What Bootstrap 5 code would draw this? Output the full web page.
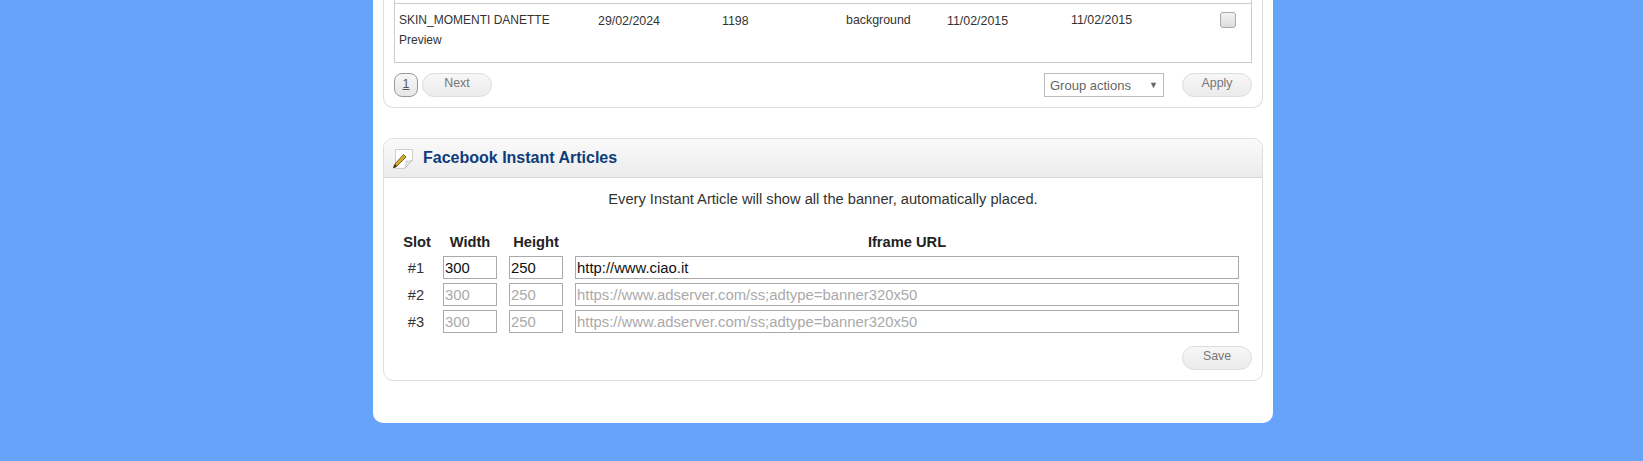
<!DOCTYPE html>
<html lang="en">
<head>
    <meta charset="UTF-8">
    <title>Facebook Instant Articles</title>
    <link href="https://cdn.jsdelivr.net/npm/bootstrap@5.3.0/dist/css/bootstrap.min.css" rel="stylesheet">
    <style>
        body {
            padding-left: 3px;
            background-color: #66a3f9;
            font-family: "Liberation Sans", Arial, sans-serif;
            color: #333;
        }
        .page-panel {
            width: 900px;
            margin: 0 auto;
            padding: 0 10px 42px;
            background: #fff;
            border-radius: 0 0 10px 10px;
        }
        .box-top {
            border: 1px solid #ddd;
            border-top: 0;
            border-radius: 0 0 10px 10px;
            padding: 0 10px 10px;
            height: 108px;
            margin-bottom: 30px;
        }
        .banner-list {
            border: 1px solid #ccc;
            border-top: 0;
            height: 63px;
            font-size: 12px;
            margin-bottom: 10px;
        }
        .banner-list .top-rule {
            height: 4px;
            border-bottom: 1px solid #ccc;
        }
        .banner-row {
            display: grid;
            grid-template-columns: 199px 124px 124px 101px 124px 149px 16px;
            padding: 8px 0 0 4px;
            line-height: 17px;
        }
        .banner-row .wide {
            font-size: 12.4px;
        }
        .banner-row .low {
            padding-top: 1px;
        }
        .banner-row .sub-line {
            margin-top: 3px;
        }
        .banner-check {
            width: 16px;
            height: 16px;
            background: linear-gradient(#f3f3f3, #dcdcdc);
            border: 1px solid #aaa;
            border-radius: 3px;
        }
        .soft-btn {
            height: 24px;
            width: 70px;
            padding: 0 0 5px;
            font-size: 12.4px;
            color: #777;
            background: linear-gradient(#f7f7f7, #ebebeb);
            border: 1px solid #ddd;
            border-radius: 12px;
        }
        .soft-btn.next-btn {
            padding-bottom: 4px;
        }
        .page-num {
            width: 24px;
            height: 24px;
            padding: 0 0 2px;
            font-size: 12.4px;
            color: #555;
            text-decoration: underline;
            background: linear-gradient(#f7f7f7, #e6e6e6);
            border: 1px solid #999;
            border-radius: 8px;
        }
        .group-select {
            width: 120px;
            height: 24px;
            margin-right: 18px;
            padding: 1px 5px 0;
            font-size: 13px;
            color: #666;
            background: #fff;
            border: 1px solid #bbb;
        }
        .group-select .arrow {
            font-size: 9px;
        }
        .box-fb {
            border: 1px solid #ddd;
            border-radius: 10px;
            overflow: hidden;
        }
        .box-head {
            height: 39px;
            padding-left: 8px;
            background: linear-gradient(#fafafa, #ececec);
            border-bottom: 1px solid #d5d5d5;
        }
        .box-head h3 {
            margin: 0 0 0 9px;
            font-size: 16px;
            font-weight: 700;
            color: #0d3c7c;
        }
        .box-intro {
            margin: 11px 0 0;
            font-size: 14.67px;
            line-height: 20px;
            text-align: center;
        }
        .slot-grid {
            display: grid;
            grid-template-columns: 28px 54px 54px 664px;
            column-gap: 12px;
            row-gap: 4px;
            margin: 23px 0 0 19px;
            align-items: center;
            font-size: 14.67px;
            text-align: center;
        }
        .slot-grid .head {
            font-weight: 700;
            color: #222;
            line-height: 20px;
        }
        .slot-grid .num {
            padding-right: 2px;
        }
        .slot-input {
            display: block;
            width: 100%;
            height: 23px;
            padding: 0 1px;
            font-size: 14.85px;
            line-height: 21px;
            color: #111;
            border: 1px solid #aaa;
            border-radius: 0;
            outline: 0;
        }
        .slot-input::placeholder {
            color: #aaa;
            opacity: 1;
        }
        .box-foot {
            padding: 13px 10px 10px;
        }
    </style>
</head>
<body>
    <div class="page-panel">
        <div class="box-top">
            <div class="banner-list">
                <div class="top-rule"></div>
                <div class="banner-row">
                    <div>SKIN_MOMENTI DANETTE<div class="sub-line">Preview</div></div>
                    <div class="low wide">29/02/2024</div>
                    <div class="low wide">1198</div>
                    <div class="wide">background</div>
                    <div class="low wide">11/02/2015</div>
                    <div class="wide">11/02/2015</div>
                    <div class="banner-check"></div>
                </div>
            </div>
            <div class="d-flex align-items-center">
                <button class="page-num me-1" type="button">1</button>
                <button class="soft-btn next-btn" type="button">Next</button>
                <div class="group-select d-flex align-items-center justify-content-between ms-auto">
                    <span>Group actions</span><span class="arrow">▼</span>
                </div>
                <button class="soft-btn" type="button">Apply</button>
            </div>
        </div>

        <div class="box-fb">
            <div class="box-head d-flex align-items-center">
                <svg width="22" height="23" viewBox="0 0 22 23" aria-hidden="true">
                    <path d="M3.500 2.500h17v10.500l-8 8.500h-9z" fill="#fff" stroke="#cfcfcf"/>
                    <path d="M20.500 13c-2 1.500-5 1-6.500 1 .3 2-.2 5.500-1.500 7.500z" fill="#e6e6e6" stroke="#bdbdbd" stroke-width=".7"/>
                    <path d="M11.500 7.500l2.500 2.500-9 9-3.500 1.500L3 17z" fill="#d9ac2b" stroke="#6f5412" stroke-width=".9"/>
                    <path d="M3 17l-2 4.500 4-2z" fill="#3f3216"/>
                </svg>
                <h3>Facebook Instant Articles</h3>
            </div>
            <p class="box-intro">Every Instant Article will show all the banner, automatically placed.</p>
            <div class="slot-grid">
                <div class="head">Slot</div>
                <div class="head">Width</div>
                <div class="head">Height</div>
                <div class="head">Iframe URL</div>

                <div class="num">#1</div>
                <input class="slot-input" value="300">
                <input class="slot-input" value="250">
                <input class="slot-input" value="http://www.ciao.it">

                <div class="num">#2</div>
                <input class="slot-input" placeholder="300">
                <input class="slot-input" placeholder="250">
                <input class="slot-input" placeholder="https://www.adserver.com/ss;adtype=banner320x50">

                <div class="num">#3</div>
                <input class="slot-input" placeholder="300">
                <input class="slot-input" placeholder="250">
                <input class="slot-input" placeholder="https://www.adserver.com/ss;adtype=banner320x50">
            </div>
            <div class="box-foot d-flex justify-content-end">
                <button class="soft-btn" type="button">Save</button>
            </div>
        </div>
    </div>
    <script src="https://cdn.jsdelivr.net/npm/bootstrap@5.3.0/dist/js/bootstrap.bundle.min.js"></script>
</body>
</html>
